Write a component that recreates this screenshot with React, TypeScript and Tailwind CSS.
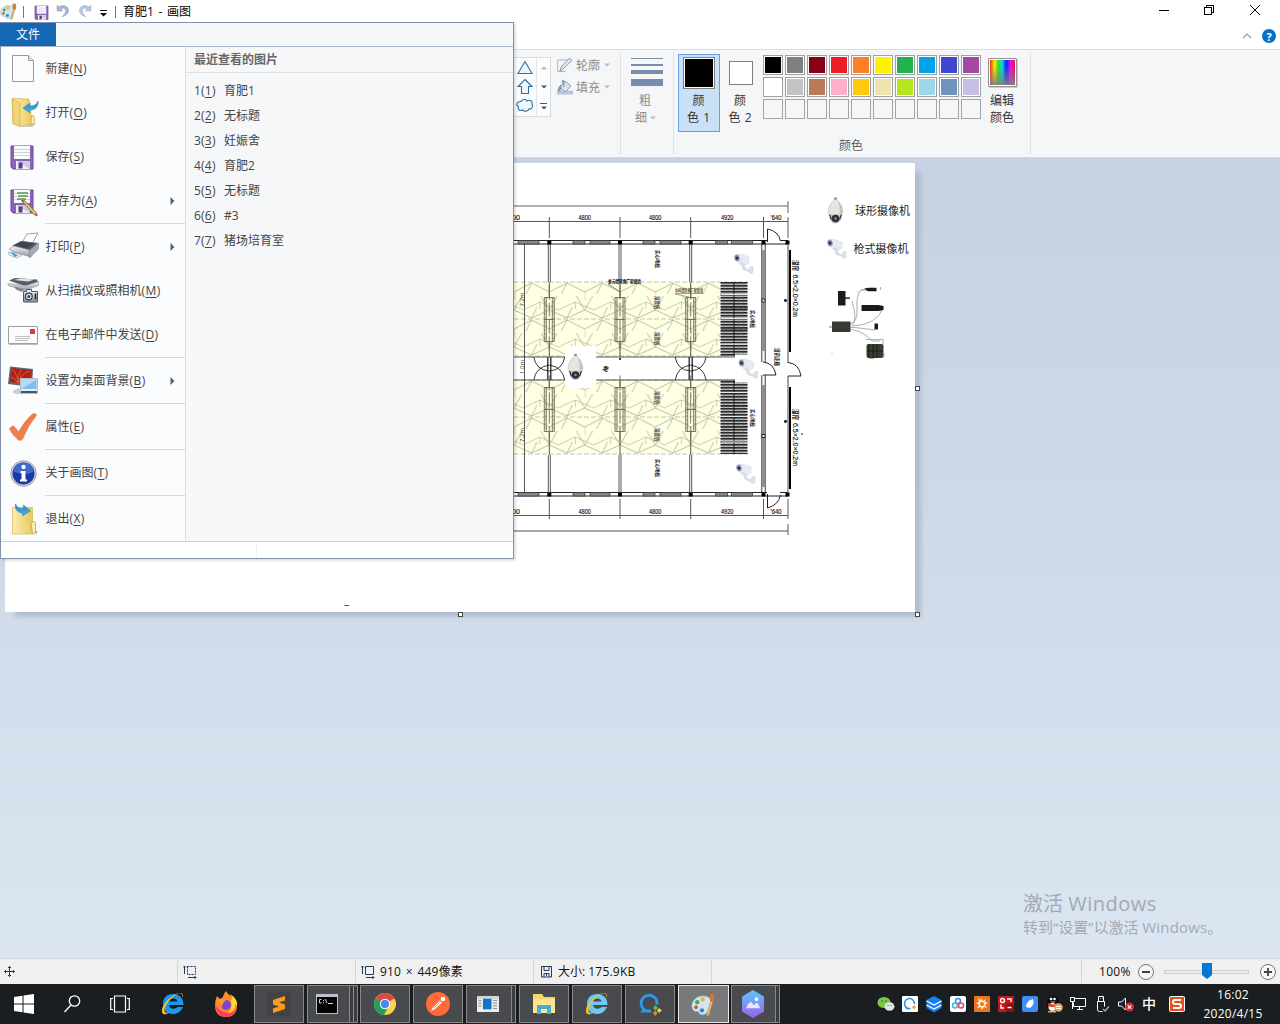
import React from "react";

type Kids = { children?: React.ReactNode };

/* ---------- small shared icons ---------- */

function Palette({ size }: { size: number }) {
  return (
    <svg width={size} height={size} viewBox="0 0 32 32">
      <path d="M1 18C1 10 9 4 17 5c7 0 10 5 9 11-1 9-7 14-13 13-3 0-2-4-5-4-3 1-7-2-7-7z" fill="#d3e6ee" stroke="#7fa6b8" />
      <circle cx="8" cy="13" r="2.800" fill="#4aa84c" />
      <circle cx="15" cy="9.500" r="2.800" fill="#e8b53c" />
      <circle cx="6.500" cy="19.500" r="2.400" fill="#d9534a" />
      <circle cx="14" cy="23.500" r="2.800" fill="#3b7fd0" />
      <path d="M26 9l3 1-3 9-3 11-3 1 1-5z" fill="#e2b878" stroke="#a97a3c" strokeWidth=".6" />
      <path d="M24 1l3 1.500L29 1l1 8-1.500 3-4-1z" fill="#d57a35" stroke="#a65f24" strokeWidth=".6" />
    </svg>
  );
}

function Floppy({ size, pencil = false, box = "0 0 32 32" }: { size: number; pencil?: boolean; box?: string }) {
  return (
    <svg width={size} height={size} viewBox={box}>
      <path d="M5 5h22v23H7l-2-2z" fill="#8a63b8" stroke="#6b4799" />
      <path d="M8 5h16v13H8z" fill="#fafafd" />
      <path d="M8 8.500h16M8 11.500h16M8 14.500h16" stroke="#c8c8d4" strokeWidth=".8" />
      {pencil && <path d="M11 8h11M12 11h10M11 14h9" stroke="#4d9f4a" strokeWidth="1.300" />}
      <path d="M10 20h14v8H10z" fill="#c9ccda" />
      <path d="M10 20l14 8h-14z" fill="#eef0f6" />
      <path d="M12.500 21.500h4v6h-4z" fill="#5a3c88" />
      {pencil && (
        <g>
          <path d="M16 16l2-1 12.500 13-2 2z" fill="#e9c878" stroke="#7b5a2a" strokeWidth=".8" />
          <path d="M28.500 30l2-2 1.500 2-1.500 1.500z" fill="#c95b5b" />
          <path d="M15 15l3 1-1.500 1.500z" fill="#444" />
        </g>
      )}
    </svg>
  );
}

function Arrow({ className }: { className: string }) {
  return (
    <svg width="6" height="4" viewBox="0 0 6 4" className={className}>
      <path d="M0 .5h6l-3 3z" fill="currentColor" />
    </svg>
  );
}

/* ---------- title bar ---------- */

function TitleBar() {
  return (
    <div className="flex h-[23px] shrink-0 items-center bg-white text-[12px] text-black">
      <Palette size={17} />
      <div className="ml-[6px] h-[12px] w-px bg-[#777]" />
      <div className="ml-[8px] mt-[1px]"><Floppy size={19} /></div>
      <svg className="ml-[5px]" width="14" height="15" viewBox="0 0 14 15">
        <path d="M1 1v6h6L4.800 5c4-2 6 1 4 4.500L6 13c7-2 8-7 5-10C9 1 5 1 3 3z" fill="#a5b4cf" stroke="#8fa0bf" strokeWidth=".5" />
      </svg>
      <svg className="ml-[8px]" width="14" height="15" viewBox="0 0 14 15">
        <path d="M13 1v6H7l2.200-2c-4-2-6 1-4 4.500L8 13C1 11 0 6 3 3c2-2 6-2 8 0z" fill="#b6c5d8" stroke="#a1b2c8" strokeWidth=".5" />
      </svg>
      <svg className="ml-[8px] mt-[3px]" width="7" height="7" viewBox="0 0 7 7">
        <path d="M0 0h7v1H0zM0 3h7L3.500 6.500z" fill="#111" />
      </svg>
      <div className="ml-[8px] h-[12px] w-px bg-[#777]" />
      <span className="ml-[7px]">育肥1<span className="px-[1.500px]"> - </span>画图</span>
      <svg className="-mt-[3px] ml-auto mr-[19px]" width="102" height="12" viewBox="0 0 102 12" fill="none" stroke="#000" shapeRendering="crispEdges">
        <path d="M0 6.500h10" />
        <path d="M45.500 3.500h7v7h-7zM47.500 3v-1.500h7v7h-1.500" />
        <path d="M91 1l10 10M101 1l-10 10" shapeRendering="auto" />
      </svg>
    </div>
  );
}

/* ---------- ribbon ---------- */

const ROW1 = ["#000000", "#7f7f7f", "#880015", "#ed1c24", "#ff7f27", "#fff200", "#22b14c", "#00a2e8", "#3f48cc", "#a349a4"];
const ROW2 = ["#ffffff", "#c3c3c3", "#b97a57", "#ffaec9", "#ffc90e", "#efe4b0", "#b5e61d", "#99d9ea", "#7092be", "#c8bfe7"];

function Swatches() {
  return (
    <div className="grid grid-cols-[repeat(10,20px)] gap-[2px]">
      {[...ROW1, ...ROW2].map((c) => (
        <div key={c} className="h-[20px] w-[20px] border border-[#a0a0a0] bg-white p-px">
          <div className="h-full w-full" style={{ backgroundColor: c }} />
        </div>
      ))}
      {ROW1.map((c) => (
        <div key={"e" + c} className="h-[20px] w-[20px] border border-[#a5a5a5] bg-[#f5f6f7]" />
      ))}
    </div>
  );
}

function Ribbon() {
  return (
    <div className="flex h-[108px] shrink-0 border-b border-[#d3d9e2] bg-[#f5f6f7] pl-[514px] text-[12px] leading-[17px]">
      <div className="mt-[7px] flex h-[60px] w-[37px] border border-l-0 border-[#dadbdc] bg-[#fbfcfd]">
        <svg className="mt-[1px]" width="22" height="56" viewBox="0 0 22 56" fill="#eef7fd" stroke="#2f6f9f" strokeWidth="1.100">
          <path d="M11 2.500L18 14.500H4z" />
          <path d="M11 20.500l7 7h-3.500v7h-7v-7H4z" />
          <path d="M7 42.500c1-2.500 5-2.500 6-.5 3-2 6 .5 5 3 1.500 3-.5 5.500-3 5-1 2.500-5 3-6 1-3 1.500-5.500-.5-4.500-3-3-2-1.500-6 2.500-5.500z" />
        </svg>
        <div className="flex h-full w-[14px] flex-col items-center justify-between border-l border-[#e3e5e8] pb-[6px] pt-[8px]">
          <Arrow className="rotate-180 text-[#b0b5bd]" />
          <Arrow className="mt-[1px] text-[#44546c]" />
          <div className="flex flex-col items-center"><div className="mb-[2px] h-px w-[7px] bg-[#44546c]" /><Arrow className="text-[#44546c]" /></div>
        </div>
      </div>
      <div className="ml-[6px] mt-[4px] flex w-[63px] flex-col text-[#8c8c8c]">
        <div className="flex h-[22px] items-center">
          <svg width="16" height="16" viewBox="0 0 16 16"><path d="M10 3H.7v11.500h8" fill="none" stroke="#a9b3c6" /><path d="M3 14l1-4 8.500-9 2.500 2.500L6 12z" fill="#dfe5ef" stroke="#8998b4" /></svg>
          <span className="ml-[3px]">轮廓</span><Arrow className="ml-[4px] text-[#bbb]" />
        </div>
        <div className="flex h-[22px] items-center">
          <svg width="16" height="16" viewBox="0 0 16 16"><path d="M0 11.500h16v4H0z" fill="#b8c4da" /><path d="M8 2l6 5-6 6-5-5z" fill="#dde3ed" stroke="#8998b4" /><path d="M7 8V2q-2-2-2 1M4 6q-3 2-3 6h2l1-4z" fill="#8fa0bf" stroke="#8998b4" /></svg>
          <span className="ml-[3px]">填充</span><Arrow className="ml-[4px] text-[#bbb]" />
        </div>
      </div>
      <div className="mt-[2px] h-[102px] w-px bg-[#e0e2e4]" />
      <div className="flex w-[52px] flex-col items-center pt-[8px] text-[#8c8c8c]">
        <div className="-ml-[1px] flex h-[28px] w-[32px] flex-col justify-between">
          <div className="h-px bg-[#7a8cad]" /><div className="h-[2px] bg-[#7a8cad]" /><div className="h-[4px] bg-[#7a8cad]" /><div className="h-[7px] bg-[#7a8cad]" />
        </div>
        <span className="-ml-[4px] mt-[6px]">粗</span>
        <span className="-ml-[3px] flex items-center">细<Arrow className="ml-[3px] text-[#bbb]" /></span>
      </div>
      <div className="mt-[2px] h-[102px] w-px bg-[#e0e2e4]" />
      <div className="ml-[4px] mt-[4px] flex h-[78px] w-[42px] flex-col items-center border border-[#62a2e4] bg-[#c9e0f7] pt-[2px] text-[#333]">
        <div className="h-[32px] w-[32px] border border-[#7f7f7f] bg-white p-px"><div className="h-full w-full bg-black" /></div>
        <span className="-ml-[1px] mt-[3px]">颜</span><span className="-ml-[1px]">色<span className="pl-[1px]"> 1</span></span>
      </div>
      <div className="mt-[11px] flex w-[42px] flex-col items-center text-[#333]">
        <div className="h-[24px] w-[24px] border border-[#7f7f7f] bg-white" />
        <span className="-ml-[2px] mt-[7px]">颜</span><span className="-ml-[2px]">色<span className="pl-[1px]"> 2</span></span>
      </div>
      <div className="ml-[1px] flex w-[218px] flex-col pt-[5px]">
        <Swatches />
        <span className="-ml-[42px] mt-[18px] text-center text-[#5a5a5a]">颜色</span>
      </div>
      <div className="ml-[6px] mt-[8px] flex w-[30px] flex-col items-center text-[#333]">
        <div className="h-[29px] w-[29px] rounded-[1px] border border-[#9a8f98] bg-white p-px shadow-[1px_1px_0_#ccc]">
          <div className="h-full w-full bg-[linear-gradient(0deg,rgba(128,128,128,0.9)_0%,rgba(128,128,128,0)_75%),linear-gradient(90deg,#f03010,#f8e800_18%,#20e020_35%,#10d8e8_48%,#1020f0_65%,#e010f0_82%,#f01040)]" />
        </div>
        <span className="mt-[5px]">编辑</span><span>颜色</span>
      </div>
      <div className="ml-[13px] mt-[2px] h-[102px] w-px bg-[#e0e2e4]" />
    </div>
  );
}

/* ---------- file menu ---------- */

function MenuIcon({ kind }: { kind: string }) {
  if (kind === "save") return <Floppy size={32} box="1 0 32 32" />;
  if (kind === "saveas") return <Floppy size={32} box="1 0 32 32" pencil />;
  return (
    <svg width="32" height="32" viewBox="0 0 32 32">
      <defs>
        <linearGradient id="fold" x1="0" x2="1"><stop offset="0" stopColor="#fbeeb0" /><stop offset="1" stopColor="#e8c95e" /></linearGradient>
        <linearGradient id="blue" x1="0" x2="0" y1="0" y2="1"><stop offset="0" stopColor="#2e7fb8" /><stop offset="1" stopColor="#45b8ec" /></linearGradient>
        <linearGradient id="metal" x1="0" x2="0" y1="0" y2="1"><stop offset="0" stopColor="#f4f5f6" /><stop offset="1" stopColor="#8f959c" /></linearGradient>
      </defs>
      {kind === "new" && <g><path d="M5.500 2.500h16l5 5v21h-21z" fill="#fbfbfb" stroke="#9a9a9a" /><path d="M21.500 2.500v5h5" fill="#e4e4e4" stroke="#9a9a9a" /></g>}
      {kind === "open" && (
        <g>
          <path d="M12 30l13-3 4 0-4 3z" fill="#c9c9c9" />
          <path d="M5 1.500l17 .5 2 16 2 1v8l-13 2-7-2z" fill="url(#fold)" stroke="#d3b04e" strokeWidth=".7" />
          <path d="M5.500 2l7.500 4v24l-7-4z" fill="#f0d477" stroke="#d3b04e" strokeWidth=".7" />
          <path d="M24.500 19h2.500q1 4 0 8h-3z" fill="#fbeeb0" stroke="#cda53c" strokeWidth=".7" />
          <path d="M16 11l7-5v3c4 0 6.500-1 8-5 .5 6-3 9-8 9v3z" fill="url(#blue)" stroke="#2f8bc0" strokeWidth=".6" />
        </g>
      )}
      {kind === "print" && (
        <g>
          <path d="M16 10l4-7 11-1-6 11z" fill="#fcfcfc" stroke="#8a8a8a" strokeWidth=".8" />
          <path d="M5 15l9-5 17 2-9 8z" fill="#555b62" />
          <path d="M2 18l5-3 16 4 1 7-18-5z" fill="url(#metal)" stroke="#767c84" strokeWidth=".5" />
          <path d="M22 20l9.500-8v6l-9 9z" fill="#a5aab0" stroke="#767c84" strokeWidth=".5" />
          <path d="M7 14l8-3.500 12 2-7 5z" fill="#3f444b" />
          <path d="M1 21l8 1 6 2-5 3-8-3z" fill="#eef5fb" stroke="#8a98a8" strokeWidth=".6" />
          <path d="M3 21.500l5 1 3 2-3 1.500z" fill="#4d9fd4" />
        </g>
      )}
      {kind === "scan" && (
        <g transform="translate(0 .5)">
          <path d="M2 5l6-2.500 22 1.500 1 3-12 4z" fill="#555d66" />
          <path d="M1 8l18 2 12.500-4v4l-14 5L1 10z" fill="url(#metal)" stroke="#7d848b" strokeWidth=".5" />
          <path d="M7 4.500l14 1.500 7-2-14-1z" fill="#dde2e8" />
          <path d="M7 11l10 2.500-2 3-6-2.500z" fill="#7f8892" />
          <path d="M16.500 16h3v-2h5v2h6v10.500h-14z" fill="url(#metal)" stroke="#4e5965" />
          <circle cx="21.800" cy="21" r="3.400" fill="#dbe3ea" stroke="#33404d" strokeWidth="1.200" /><circle cx="21.800" cy="21" r="1.500" fill="#2e4a66" />
          <path d="M28.500 18v6" stroke="#222" strokeWidth="1.600" />
        </g>
      )}
      {kind === "mail" && (
        <g>
          <path d="M1.500 7.500h29v17h-29z" fill="#fcfcfc" stroke="#a1a1a1" /><path d="M2 25.500h29" stroke="#bbb" />
          <path d="M23 10h5v5h-5z" fill="#d4414c" /><path d="M8 17.500h15M8 19.500h15M8 21.500h13" stroke="#b9b9b9" strokeWidth=".9" />
        </g>
      )}
      {kind === "desktop" && (
        <g>
          <path d="M6 26q5-5 10 0l2 2q-7 2-12 0z" fill="#c9ced4" />
          <path d="M3 1.500l23 2.500-1 18L1 19z" fill="#62656d" /><path d="M4.500 3l20 2.300-1 14L3 17z" fill="#ad2118" />
          <path d="M11 18Q14 8 23 6M11 18Q10 8 5 4M11 18Q11 8 15 4.500M11 18q6-5 12-5M11 18Q7 12 4 12" stroke="#e2603f" strokeWidth=".9" fill="none" />
          <path d="M13.500 13.500h17v15h-17z" fill="#e8edf3" stroke="#b4bcc6" /><path d="M14.500 14.500h15v9.500h-15z" fill="#7fbdf0" /><path d="M14.500 24L29 15v-.5H14.500z" fill="#b5dbf8" />
          <path d="M14 26h16v2H14z" fill="#3f5a73" />
        </g>
      )}
      {kind === "check" && <path d="M2.500 18q2-3 4-3 3 3 5 6Q18.500 9 25.500 3q3-1 4 1Q20.500 15 15.500 28q-1 2-4 1Q6.500 25 2.500 18z" fill="#ee7f49" stroke="#d9703f" strokeWidth=".8" />}
      {kind === "info" && (
        <g transform="translate(.5 .5)">
          <circle cx="16" cy="16" r="12.800" fill="#c8ccd3" stroke="#8b8f98" strokeWidth=".7" /><circle cx="16" cy="16" r="11" fill="#173aa8" />
          <path d="M6 14a10 9 0 0 1 20 0q-8 5-20 0z" fill="#3f69cc" /><circle cx="16" cy="9.500" r="2.200" fill="#fff" /><path d="M13 13.500h5V22h1.500v2h-7v-2H14v-6.500h-1z" fill="#fff" />
        </g>
      )}
      {kind === "exit" && (
        <g>
          <path d="M26 29l5-1-2 3z" fill="#aaa" />
          <path d="M5.500 4.500h20v26.500h-20z" fill="url(#fold)" stroke="#d9bd5a" strokeWidth=".8" /><path d="M24 19.500l3-1 1.500 1v10l-3 1.500z" fill="#fbeeb0" stroke="#cda53c" strokeWidth=".8" />
          <path d="M8.500 1c2 4 4 5 8 4V2l7 6-8 5v-3c-5 0-8-4-7-9z" fill="url(#blue)" stroke="#2f8bc0" strokeWidth=".6" />
        </g>
      )}
    </svg>
  );
}

const ITEMS: { t: string; k: string; icon: string; sub?: boolean; sep?: boolean }[] = [
  { t: "新建", k: "N", icon: "new" },
  { t: "打开", k: "O", icon: "open" },
  { t: "保存", k: "S", icon: "save" },
  { t: "另存为", k: "A", icon: "saveas", sub: true, sep: true },
  { t: "打印", k: "P", icon: "print", sub: true },
  { t: "从扫描仪或照相机", k: "M", icon: "scan" },
  { t: "在电子邮件中发送", k: "D", icon: "mail", sep: true },
  { t: "设置为桌面背景", k: "B", icon: "desktop", sub: true, sep: true },
  { t: "属性", k: "E", icon: "check", sep: true },
  { t: "关于画图", k: "T", icon: "info", sep: true },
  { t: "退出", k: "X", icon: "exit" },
];

const RECENT = ["育肥1", "无标题", "妊娠舍", "育肥2", "无标题", "#3", "猪场培育室"];

function FileMenu() {
  return (
    <div className="absolute left-0 top-[22px] flex h-[537px] w-[514px] flex-col border border-[#7f90a8] bg-white text-[12px] text-[#444] shadow-[2px_2px_2px_rgba(0,0,0,0.12)]">
      <div className="flex h-[24px] shrink-0 border-b border-[#a6b5c9] bg-[#f5f6f7]">
        <div className="-ml-px flex w-[56px] items-center justify-center bg-[#1467b3] text-white">文件</div>
      </div>
      <div className="flex h-[495px] shrink-0 border-b border-[#c5d2e0]">
        <div className="flex w-[185px] flex-col border-r border-[#d9dce0] bg-[#fbfcfe]">
          {ITEMS.map((it) => (
            <React.Fragment key={it.k}>
              <div className="flex h-[44px] shrink-0 items-center pl-[6px] pr-[10px]">
                <MenuIcon kind={it.icon} />
                <span className="ml-[6.500px] whitespace-nowrap">{it.t}<span className="tracking-[0.400px]">(<u className="underline-offset-2">{it.k}</u>)</span></span>
                {it.sub && <svg className="ml-auto" width="5" height="8" viewBox="0 0 5 8"><path d="M.5 0l4 4-4 4z" fill="#4f6480" /></svg>}
              </div>
              {it.sep && <div className="ml-[44px] h-[2px] shrink-0 border-t border-[#d7dadd]" />}
            </React.Fragment>
          ))}
        </div>
        <div className="flex flex-1 flex-col bg-[#f5f7f9]">
          <div className="flex h-[26px] items-center border-b border-[#dddfe2] pl-[8px] font-bold text-[#666]">最近查看的图片</div>
          <div className="mt-[5px] flex flex-col pl-[8px]">
            {RECENT.map((r, i) => (
              <div key={i} className="flex h-[25px] items-center">
                <span className="w-[30px] tracking-[0.200px]">{i + 1}(<u className="underline-offset-2">{i + 1}</u>)</span>
                <span>{r}</span>
              </div>
            ))}
          </div>
        </div>
      </div>
      <div className="flex-1"><div className="ml-[255px] h-full w-px bg-[#eef0f2]" /></div>
    </div>
  );
}

/* ---------- floor plan ---------- */

const COLS = [549.3, 620, 690.7];

function Bullet({ x, y }: { x: number; y: number }) {
  return (
    <g transform={`translate(${x} ${y})`}>
      <path d="M1 1l5-1 9 3v6l-4 2-6-1z" fill="#e6eaf3" stroke="#cdd4e1" strokeWidth=".5" />
      <path d="M7 9l3 1 1 4 4 2 1-3 3-.5v6l-3 1-1-2-6-2z" fill="#dce1ec" stroke="#c3cbda" strokeWidth=".5" />
      <ellipse cx="3" cy="4" rx="2.600" ry="3.400" transform="rotate(-15 3 4)" fill="#8b94aa" /><circle cx="3" cy="4" r="1.500" fill="#222c44" />
    </g>
  );
}

function Dome({ x, y }: { x: number; y: number }) {
  return (
    <g transform={`translate(${x} ${y})`}>
      <path d="M8 0q1.500 0 1.500 2.500 6 5 6 12.500-1 4-7.500 4T.5 15q0-7.500 6-12.500Q6.500 0 8 0z" fill="#e4e4e0" stroke="#b5b5b0" strokeWidth=".5" />
      <path d="M10 3q5 5 5 12l-3 2q1-9-2-14z" fill="#c3c3be" />
      <path d="M6.800 0h2.400v2H6.800z" fill="#888" />
      <path d="M2 17h12v4q-2 5-6 5t-6-5z" fill="#c4c7cc" /><circle cx="8" cy="21" r="3.800" fill="#2b2e36" /><circle cx="8" cy="21" r="1.300" fill="#7f93b5" />
      <path d="M2 17l2 5M14 17l-2 5" stroke="#333" strokeWidth="1.200" />
    </g>
  );
}

function Trough({ x, y }: { x: number; y: number }) {
  return (
    <g stroke="#6c6c54" fill="none" strokeWidth=".9">
      <path d={`M${x - 5} ${y}h10v44h-10zM${x - 3} ${y}v44M${x + 3} ${y}v44M${x - 5} ${y + 22}h10`} />
      <path d={`M${x} ${y - 12}V${y + 57}`} strokeDasharray="14 3" />
      <path d={`M${x - 4} ${y}v44M${x + 4} ${y}v44`} strokeDasharray="1 3" />
    </g>
  );
}

function Slats({ y }: { y: number }) {
  return (
    <g>
      <rect x="720.500" y={y} width="27" height="74" fill="url(#slat)" />
      <path d={`M734 ${y}v74M721 ${y + 26}h27M721 ${y + 47}h27`} stroke="#222" strokeWidth="1.100" />
      <path d={`M724 ${y}v74M728 ${y}v74M738 ${y}v74M743 ${y}v74`} stroke="#666" strokeWidth=".5" />
      <path d={`M721 ${y + 12.5}h27M721 ${y + 36.5}h27M721 ${y + 62}h27`} stroke="#e8e8e8" strokeWidth="1" />
    </g>
  );
}

function VText({ x, y, size = 5, bold = true, length, children }: Kids & { x: number; y: number; size?: number; bold?: boolean; length?: number }) {
  return <text transform={`translate(${x} ${y}) rotate(90)`} fontSize={size} fontWeight={bold ? 700 : 400} fill="#222" textLength={length} lengthAdjust="spacingAndGlyphs">{children}</text>;
}

function Zone({ y, pattern }: { y: number; pattern: string }) {
  return (
    <g>
      <rect x="500" y={y} width="220" height="74" fill="#ffffe3" />
      <rect x="500" y={y} width="220" height="74" fill={pattern} />
      <path d={`M500 ${y + 37}h220M500 ${y}h248M500 ${y + 74}h248`} stroke="#b5b5a0" strokeWidth=".8" strokeDasharray="5 2" />
    </g>
  );
}

function HexPattern({ id, y }: { id: string; y: number }) {
  return (
    <pattern id={id} x="549.3" y={y} width="35.350" height="37" patternUnits="userSpaceOnUse">
      <g stroke="#a3a386" strokeWidth=".7" fill="none">
        <path d="M0 10L17.700 1L35.350 10M0 28L17.700 36L35.350 28M0 10v8" />
        <path d="M0 28L8 14M35.350 28L27 14M17.700 1L12 12M17.700 36L23 25" />
        <path d="M-8 20L9 28L26 20L43.300 28M26 20v7" strokeWidth=".55" />
      </g>
    </pattern>
  );
}

function FloorPlan() {
  const windows = [[518, 21], [573, 12], [590, 20], [643, 12], [660, 21], [715.7, 12], [731.5, 21]];
  return (
    <svg className="block h-[449px] w-[910px] bg-white" viewBox="5 163 910 449">
      <defs>
        <HexPattern id="hexTop" y={282} />
        <HexPattern id="hexBottom" y={380} />
        <pattern id="slat" x="720" y="282" width="3.400" height="3" patternUnits="userSpaceOnUse">
          <rect width="3.400" height="3" fill="#c4c4c4" /><path d="M0 .8h3.400" stroke="#1c1c1c" strokeWidth="1.500" />
        </pattern>
      </defs>
      <Zone y={282} pattern="url(#hexTop)" />
      <Zone y={380} pattern="url(#hexBottom)" />
      <Slats y={282} />
      <Slats y={380} />
      {/* dimension lines */}
      <g stroke="#444" strokeWidth=".9" fill="none">
        <path d="M500 206h288M788 201v12" stroke="#555" />
        <path d="M500 221.500h288" />
        <path d="M500 515.500h288" />
        <path d="M500 531h288" stroke="#888" strokeWidth="1.300" />
        <path d="M788 524v11" />
        {[...COLS, 763.5, 788].map((x) => <path key={x} d={`M${x} 217v21M${x} 499v20`} />)}
        <path d="M524.500 244v249" />
        <path d="M500 357h248M500 380h248" />
      </g>
      <rect x="735" y="354.500" width="14.500" height="28" fill="#fff" />
      <g fontFamily="Liberation Sans" fontSize="7.500" fill="#111" stroke="#111" strokeWidth=".15">
        {[219.5, 513.8].map((y) => (
          <g key={y}>
            <text x="512" y={y} textLength="8" lengthAdjust="spacingAndGlyphs">00</text>
            <text x="578.500" y={y} textLength="12.500" lengthAdjust="spacingAndGlyphs">4800</text>
            <text x="649" y={y} textLength="12.500" lengthAdjust="spacingAndGlyphs">4800</text>
            <text x="721" y={y} textLength="12.500" lengthAdjust="spacingAndGlyphs">4920</text>
            <text x="770.500" y={y} textLength="11" lengthAdjust="spacingAndGlyphs">'640</text>
          </g>
        ))}
      </g>
      {/* outer walls */}
      {[240.5, 492.5].map((y) => (
        <g key={y}>
          <path d={`M500 ${y}h267M780 ${y}h8M500 ${y + 3.5}h288`} stroke="#222" strokeWidth="1" />
          {windows.map(([x, w]) => <rect key={x} x={x} y={y} width={w} height="3.500" fill="#888" stroke="#333" strokeWidth=".7" />)}
          {[...COLS, 763.5, 787.5].map((x) => <rect key={x} x={x - 2} y={y} width="4" height="4" fill="#000" />)}
        </g>
      ))}
      {COLS.map((x) => (
        <g key={x} stroke="#444" strokeWidth=".9" fill="none">
          <path d={`M${x - 1} 244v38M${x + 1} 244v38M${x - 1} 455v38M${x + 1} 455v38`} />
          <path d={`M${x} 282v15M${x} 342v15M${x} 380v7M${x} 432v23`} />
          {x !== 620 && (
            <g stroke="#222">
              <path d={`M${x - 1.5} 357v23M${x + 1.5} 357v23`} strokeWidth="1.300" />
              <path d={`M${x - 15.5} 357q2 13 15.500 14q13-1 15.500-14M${x - 15.5} 380q2-13 15.500-15q13 2 15.500 15`} />
            </g>
          )}
        </g>
      ))}
      {COLS.map((x) => <Trough key={x} x={x} y={297.5} />)}
      {COLS.map((x) => <Trough key={x} x={x} y={387.5} />)}
      <circle cx="620" cy="359" r="1" />
      {/* east corridor */}
      <g fill="none" stroke="#222">
        <path d="M761.800 244v118M765.200 244v118M761.800 375v118M765.200 375v118" strokeWidth=".9" />
        <path d="M763.500 250v101M763.500 385v102" stroke="#888" strokeWidth="2.500" />
        <path d="M788 244v119M788 376v117" stroke="#666" strokeWidth="1.200" />
        <path d="M790 250v102M790 387v102" stroke="#000" strokeWidth="2" />
        <path d="M767.500 242v-13q11 2 13 12M767.500 494v14q11-3 13-13M763 362q11 1 13 13h-13M788 362.500q11 1 13 13.500h-13" />
        <path d="M762 299h3v3h-3zM762 434.500h3v3h-3z" fill="#fff" strokeWidth="1" />
      </g>
      <circle cx="785.500" cy="300.500" r="1.400" /><circle cx="785.500" cy="421.500" r="1.400" /><circle cx="802" cy="434" r=".8" />
      {/* labels */}
      <VText x={792.5} y={260} size={6.5} length={11}>湿帘</VText>
      <VText x={792.5} y={409} size={6.5} length={11}>湿帘</VText>
      <g fontFamily="Liberation Sans" stroke="#222" strokeWidth=".15">
        <VText x={792.5} y={274.5} size={8} bold={false} length={42.5}>6.5×2.0×0.2m</VText>
        <VText x={792.5} y={423} size={8} bold={false} length={43}>6.5×2.0×0.2m</VText>
      </g>
      <VText x={775} y={348} size={5.2} length={18}>湿帘走廊</VText>
      <VText x={751} y={310} size={5} length={18}>实心地板</VText><VText x={751} y={409} size={5} length={18}>实心地板</VText>
      <VText x={655.5} y={250} size={5} length={18}>实心地板</VText><VText x={655.5} y={459} size={5} length={18}>实心地板</VText>
      <g opacity=".75">
        <VText x={655} y={296} size={5.5} length={13.5}>漏粪板</VText><VText x={655} y={332} size={5.5} length={13.5}>漏粪板</VText>
        <VText x={655} y={391} size={5.5} length={13.5}>漏粪板</VText><VText x={655} y={428} size={5.5} length={13.5}>漏粪板</VText>
      </g>
      <g opacity=".8">
        <text transform="translate(523.500 306.500) rotate(-90)" fontSize="6">7.2m</text>
        <text transform="translate(523.500 442) rotate(-90)" fontSize="6">7.2m</text>
        <text transform="translate(523.500 374) rotate(-90)" fontSize="6">1.0m</text>
      </g>
      <text x="608" y="283" fontSize="5" fontWeight="700" textLength="33" lengthAdjust="spacingAndGlyphs">单元墙转角厂家提供</text>
      <path d="M608 284l12 8" stroke="#555" strokeWidth=".7" />
      <text x="675" y="292" fontSize="5" fontWeight="700" fill="#55553f" textLength="28" lengthAdjust="spacingAndGlyphs">中间墙转角厂家提供</text>
      <path d="M675 293.500h28M675 294l14 3" stroke="#777" strokeWidth=".7" />
      <text x="603" y="371" fontSize="6" fontWeight="700" transform="rotate(20 606 368)">走</text>
      {/* cameras */}
      <rect x="565" y="346" width="31" height="42" fill="#fff" />
      <Dome x={567.5} y={354} />
      <Bullet x={734} y={254} /><Bullet x={738.5} y={359} /><Bullet x={736} y={464} />
      <Dome x={827.5} y={197.5} /><Bullet x={827} y={239} />
      <g fontSize="11" fill="#222"><text x="855" y="215">球形摄像机</text><text x="853.500" y="253">枪式摄像机</text></g>
      {/* cable kit */}
      <g fill="none" stroke="#999" strokeWidth=".8">
        <path d="M845 298h5M850 324q8-2 7-16-1-12 4-18h5M852 325q6-4 0-24M852 326q25-1 31-18M850 327q18 2 25 3M850 329q15 3 22 12h8M866 339.500h17v5" />
        <path d="M829 327h4" stroke="#555" />
      </g>
      <g fill="#1b1b18">
        <rect x="838" y="291" width="7.500" height="14.500" /><path d="M845 297.500h5v1.200h-5zM864 288.800l4-1h8.500v3.500H868z" />
        <path d="M861.500 305h17l5 1v4l-5 1h-17z" /><rect x="832" y="321.500" width="18.500" height="10.500" fill="#393931" />
        <rect x="874.500" y="323.500" width="3.500" height="6" /><rect x="866.500" y="344" width="17" height="14" rx="2" fill="#3a3d36" />
      </g>
      <path d="M861 290h3M880.500 287v3M866.500 345v5M884 353v4M858 291v1.500M869 358.500h5" stroke="#5fc45f" strokeWidth=".8" />
      <path d="M869 344v14M873 344v14M877 344v14M867 351h16" stroke="#15170f" strokeWidth=".8" />
      <path d="M831 354h2" stroke="#9fd09f" strokeWidth=".8" />
      <path d="M344.500 605.500h4.500" stroke="#333" fill="none" strokeWidth=".9" />
    </svg>
  );
}

function Workspace() {
  return (
    <div className="relative min-h-0 flex-1 overflow-hidden bg-[linear-gradient(180deg,#c7d1e2_0%,#cfd9e8_50%,#dce6f2_100%)] pl-[5px] pt-[5px]">
      <div className="w-[910px] shadow-[8px_7px_4px_-2px_#b1bed1]"><FloorPlan /></div>
      <div className="absolute left-[915px] top-[228px] h-[5px] w-[5px] border border-[#444] bg-white" />
      <div className="absolute left-[458px] top-[454px] h-[5px] w-[5px] border border-[#444] bg-white" />
      <div className="absolute left-[915px] top-[454px] h-[5px] w-[5px] border border-[#444] bg-white" />
      <div className="absolute left-[1023px] top-[732px] whitespace-nowrap text-[#a1a9b4]">
        <div className="text-[20px] leading-[27px]">激活 <span className="tracking-[0.500px]">Windows</span></div>
        <div className="text-[15px] leading-[20px]">转到“设置”以激活 <span className="tracking-[0.150px]">Windows</span>。</div>
      </div>
    </div>
  );
}

/* ---------- status bar ---------- */

function StatusBar() {
  const cell = "flex h-[23px] items-center border-r border-[#d4d4d4]";
  return (
    <div className="flex h-[26px] shrink-0 items-center border-t border-[#d2d5d9] bg-[#f0f0f0] text-[12px] text-[#111]">
      <div className={cell + " w-[178px] pl-[4px]"}>
        <svg width="12" height="12" viewBox="0 0 12 12" fill="none" stroke="#223a5e"><path d="M5.500 .5v10M.5 5.500h10M4 2L5.500 .5 7 2M4 9l1.500 1.500L7 9M2 4L.5 5.500 2 7M9 4l1.500 1.500L9 7" /></svg>
      </div>
      <div className={cell + " w-[178px] pl-[5px]"}>
        <svg width="14" height="14" viewBox="0 0 14 14" fill="none" stroke="#223a5e"><path d="M4.500 1.500h8v8h-8z" strokeDasharray="2 1" /><path d="M1.500 9V1M0 2.500L1.500 1 3 2.500M5 12.500h8M11.500 11l1.500 1.500-1.500 1.500" /></svg>
      </div>
      <div className={cell + " w-[178px] pl-[5px]"}>
        <svg width="14" height="14" viewBox="0 0 14 14" fill="none" stroke="#223a5e"><path d="M4.500 1.500h8v8h-8z" /><path d="M1.500 9V1M0 2.500L1.500 1 3 2.500M5 12.500h8M11.500 11l1.500 1.500-1.500 1.500" /></svg>
        <span className="ml-[5px] tracking-[0.150px]">910<span className="px-[1.500px]"> × </span>449像素</span>
      </div>
      <div className={cell + " w-[178px] pl-[7px]"}>
        <svg width="12" height="12" viewBox="0 0 12 12" fill="none" stroke="#223a5e"><path d="M.5.5h10v10.500h-10zM3 .5v4h5v-4M3 11V7.500h5V11M5.500 8v2" /></svg>
        <span className="ml-[5px]">大小: <span className="tracking-[0.200px]">175.9KB</span></span>
      </div>
      <div className={cell + " w-[370px]"} />
      <span className="ml-[17px] w-[38px] tracking-[0.300px]">100%</span>
      <svg width="18" height="18" viewBox="0 0 18 18"><circle cx="9" cy="9" r="7.500" fill="#f5f5f5" stroke="#777" /><path d="M5 9h8" stroke="#444" strokeWidth="2" /></svg>
      <svg className="ml-[9px]" width="86" height="18" viewBox="0 0 86 18"><path d="M.5 7.500h84v3h-84z" fill="#e7eaea" stroke="#d0d0d0" /><path d="M38 0h10v12l-5 4-5-4z" fill="#0078d7" /></svg>
      <svg className="ml-[9px] shrink-0" width="18" height="18" viewBox="0 0 18 18"><circle cx="9" cy="9" r="7.500" fill="#f5f5f5" stroke="#777" /><path d="M5 9h8M9 5v8" stroke="#444" strokeWidth="1.800" /></svg>
    </div>
  );
}

/* ---------- taskbar ---------- */

function IE({ light = false }: { light?: boolean }) {
  return (
    <svg width="26" height="26" viewBox="0 0 26 26">
      <path d="M13 3c6.500 0 10.500 4 10.500 11H9c.5 4.500 6.500 4.500 8.500 2h5.500c-2 4.500-5.500 7-10 7-6 0-10-4-10-10s4-10 10-10zM9 10.500h8.500c-.5-4-7.500-4-8.500 0z" fill={light ? "#6cc9f2" : "#1c97ea"} />
      <path d="M22 7c3-6-3-6-8-3C7 8 1 16 2 21c1 4 5 2 7 .5-4 1-5.500-1-4-5C7 11.500 12 6 17 3c4-1.500 6-.5 5 4z" fill="#f2c230" />
    </svg>
  );
}

function Task({ w, children, active = false }: Kids & { w: string; active?: boolean }) {
  return (
    <div className={"flex h-[38px] shrink-0 items-center justify-center border " + (active ? "border-[#e8e8e8] bg-[#77797b] " : "border-[#88898b] bg-[#484a4d] ") + w}>{children}</div>
  );
}

function Stack() {
  return <div className="h-[38px] w-[4px] shrink-0 border border-l-0 border-[#88898b] bg-[#3a3c3f]" />;
}

function Tray({ children }: Kids) {
  return <div className="flex w-[24px] shrink-0 items-center justify-center"><svg width="18" height="18" viewBox="0 0 18 18">{children}</svg></div>;
}

function Taskbar() {
  return (
    <div className="flex h-[40px] shrink-0 items-center overflow-hidden bg-[#1b1e21] text-white">
      <svg className="ml-[14px] shrink-0" width="20" height="20" viewBox="0 0 20 20" fill="#fff"><path d="M0 3l8.500-1.300v7.800H0zM9.500 1.500L20 0v9.500H9.500zM0 10.500h8.500v7.800L0 17zM9.500 10.500H20V20L9.500 18.500z" /></svg>
      <svg className="ml-[29px] shrink-0" width="20" height="20" viewBox="0 0 20 20" fill="none" stroke="#fff" strokeWidth="1.300"><circle cx="11.500" cy="7" r="5.200" /><path d="M8 11L1.500 18" /></svg>
      <svg className="ml-[27px] shrink-0" width="20" height="18" viewBox="0 0 20 18" fill="none" stroke="#fff" strokeWidth="1.200"><path d="M4.500 1h11v16h-11zM3 3.500H.7v11H3M17 3.500h2.300v11H17" /></svg>
      <div className="ml-[30px] shrink-0"><IE /></div>
      <svg className="ml-[27px] shrink-0" width="26" height="28" viewBox="0 0 26 28">
        <path d="M13 1q2 4 5 5 5 3 6 9 0 12-11 12T2 15q0-5 2-9l3 3 3-2q1-4 3-6z" fill="#ff8a2a" />
        <path d="M17 4q8 5 7 12l-4-7zM20 6q5 8 0 15l-5 3q5-6 3-13z" fill="#ffd83a" /><path d="M2 14q1 12 11 13 8 0 10-8-4 5-9 4-9-2-12-9z" fill="#ff3a62" />
        <circle cx="13" cy="15" r="5" fill="#7b45cc" /><path d="M5 9l3 1h5l-3 3-1 4z" fill="#ff9a2e" />
      </svg>
      <div className="ml-[15px] flex items-center">
        <Task w="w-[50px]"><svg width="24" height="24" viewBox="0 0 24 24"><rect width="24" height="24" rx="3" fill="#424345" /><path d="M6 8l12-4v4.500l-6 2 6 2v4.500L6 21v-4.500l6-2-6-2z" fill="#ff9b1a" /></svg></Task>
        <div className="ml-[3px] flex"><Task w="w-[43px]"><svg className="-ml-[4px]" width="22" height="20" viewBox="0 0 22 20"><rect width="22" height="20" fill="#bbc2c8" /><rect x="1" y="3" width="20" height="16" fill="#050505" /><path d="M5.500 5.500h-2v3.500h2M7.500 6v1M7.500 8v1M9 5l2 4M12 9.500h5" stroke="#eee" fill="none" strokeWidth=".9" /></svg></Task><Stack /><Stack /></div>
        <div className="ml-[2px]"><Task w="w-[50px]">
          <svg width="24" height="24" viewBox="0 0 24 24"><circle cx="12" cy="12" r="11" fill="#fbd34c" /><path d="M12 12L2.500 6.500A11 11 0 0 1 21.500 6.500z" fill="#da4b41" /><path d="M12 12L2.500 6.500A11 11 0 0 0 11 23l4.500-8z" fill="#1ba260" /><path d="M12 7h9.700a11 11 0 0 0-1.700-2z" fill="#da4b41" /><circle cx="12" cy="12" r="5.200" fill="#fff" /><circle cx="12" cy="12" r="4.200" fill="#4a87ee" /></svg>
        </Task></div>
        <div className="ml-[3px]"><Task w="w-[50px]"><svg width="24" height="24" viewBox="0 0 24 24"><circle cx="12" cy="12" r="12" fill="#ff6c37" /><path d="M5 19l2-3.500 7-7 2 2-7 6.500z" fill="#fff" /><circle cx="17" cy="7" r="2.300" fill="#fff" /><path d="M8 16l7-7" stroke="#ff6c37" strokeWidth=".8" /></svg></Task></div>
        <div className="ml-[3px] flex"><Task w="w-[46px]"><svg className="-ml-[2px]" width="22" height="16" viewBox="0 0 22 18" preserveAspectRatio="none"><rect width="22" height="18" fill="#ececec" /><rect width="22" height="3" fill="#cfd5d9" /><rect x="6" y="3" width="8.500" height="12" fill="#0f74cc" /><path d="M1.500 5h3M1.500 8h3M1.500 11h3M16 5h4M16 8h4M16 11h4M16 14h4" stroke="#888" /></svg></Task><Stack /></div>
        <div className="ml-[3px]"><Task w="w-[50px]"><svg width="22" height="22" viewBox="0 0 22 22"><path d="M0 1h9l2 3h11v16H0z" fill="#f7d46c" /><path d="M0 6h22v14H0z" fill="#fde48f" /><path d="M4 21v-9h14v9h-4v-5H8v5z" fill="#48acd6" /></svg></Task></div>
        <div className="ml-[3px]"><Task w="w-[50px]"><IE light /></Task></div>
        <div className="ml-[3px]"><Task w="w-[50px]"><svg width="24" height="24" viewBox="0 0 24 24"><path d="M19 12.500a8 8 0 1 0-6 6.500H5l2-2.500" fill="none" stroke="#2c9ae8" strokeWidth="2.800" /><path d="M17.500 13l2.500 3-2.500 2.500L15 16z" fill="#4bc34f" /><path d="M21 16l3 2.500-3 2.500-2-2.500z" fill="#f5cf3a" /><path d="M17 18.500l2.500 2.500-2.500 3-2-3z" fill="#f5842e" /></svg></Task></div>
        <div className="ml-[3px]"><Task w="w-[51px]" active><Palette size={25} /></Task></div>
        <div className="ml-[2px] flex"><Task w="w-[45px]">
          <svg className="-ml-[2px]" width="24" height="28" viewBox="0 0 24 26" preserveAspectRatio="none"><defs><linearGradient id="hx" x1="0" x2="0" y1="0" y2="1"><stop offset="0" stopColor="#5bc8f5" /><stop offset="1" stopColor="#9a60ee" /></linearGradient></defs><path d="M12 0l11 6v14l-11 6L1 20V6z" fill="url(#hx)" strokeLinejoin="round" /><path d="M5 17q4-9 7-4 1 2 2 0 3-3 5 4z" fill="#e6e4ff" /><circle cx="15.500" cy="8.500" r="1.800" fill="#fff" /></svg>
        </Task><Stack /></div>
      </div>
      <div className="ml-[94px] flex items-center">
        <Tray><ellipse cx="7" cy="7.500" rx="6.500" ry="5.500" fill="#7ac943" /><ellipse cx="12.500" cy="11.500" rx="5" ry="4.300" fill="#e3e6e6" /><path d="M4.500 6h1.500M8.500 6H10M10.500 10.500h1M13.500 10.500h1" stroke="#345" /></Tray>
        <Tray><rect x="1" y="1" width="16" height="16" rx="1" fill="#fff" /><path d="M13.500 9a5 5 0 1 0-4 4.500H5" fill="none" stroke="#2c8ee0" strokeWidth="1.500" /><path d="M13 10l2 2.500-2 2-2-2z" fill="#f6a623" /></Tray>
        <Tray><path d="M9 1l7.500 4v8L9 17.500 1.500 13V5z" fill="#1a7ff0" /><path d="M1.500 6L9 10l7.500-4M1.500 10L9 14l7.500-4" stroke="#fff" fill="none" strokeWidth="1.300" /></Tray>
        <Tray><rect x="1" y="1" width="16" height="16" rx="2" fill="#fff" /><g fill="none" strokeWidth="1.500"><circle cx="9" cy="6" r="2.500" stroke="#3a8df0" /><circle cx="6" cy="10.500" r="2.500" stroke="#40b6e8" /><circle cx="12" cy="10.500" r="2.500" stroke="#dc4c64" /></g></Tray>
        <Tray><rect x="1" y="1" width="16" height="16" rx="1" fill="#ee7418" /><path d="M9 3l1 3 3-2-1 3 3 1-3 2 2 3-3-1-2 3-1-3-4 1 2-3-3-2 3-1-1-4 3 2z" fill="#ffe9cf" /><circle cx="9" cy="9" r="2" fill="#ee7418" /></Tray>
        <Tray><rect x="1" y="1" width="16" height="16" rx="1" fill="#c4161c" /><path d="M9 9h8v8H9z" fill="#8c0f14" /><g fill="none" stroke="#fff" strokeWidth="1.400"><circle cx="5.500" cy="5.500" r="2" /><path d="M10 4h4v3M4 9.500v3.500h3M10.500 12.500h4" /></g></Tray>
        <Tray><rect x="1" y="1" width="16" height="16" rx="2" fill="#3e8ef7" /><path d="M5 12q0-6 7-8 2 6-3 9z" fill="#fff" /></Tray>
        <Tray><ellipse cx="8" cy="9" rx="6" ry="8" fill="#0c0c0c" /><ellipse cx="7.500" cy="12" rx="4" ry="4" fill="#fff" /><path d="M3 8q5 3 10 0v3q-5 2-10 0z" fill="#dd2f2f" /><circle cx="6" cy="4" r="1.300" fill="#fff" /><circle cx="9.500" cy="4" r="1.300" fill="#fff" /><path d="M5 6.500h6l-3 1.500z" fill="#f6a623" /><path d="M3 16h8v1.500H3z" fill="#f6a623" /><circle cx="13.500" cy="12.500" r="4.300" fill="#f7a046" /><path d="M11 11.500h5M11 13.500h5" stroke="#fff" /></Tray>
        <Tray><g fill="none" stroke="#fff"><path d="M5.500 3.500h11v8H4.500v-4M8 14.500h6M10.500 12v2.500M1.500 2.500h4v4h-4zM3.500 7v7" /></g></Tray>
        <Tray><g fill="none" stroke="#fff"><path d="M5.500 1.500h5v5h-5zM4.500 6.500h7v5M4.500 6.500v8q0 2 2 2h3M7 3.500h.5M9 3.500h.5" /><path d="M10 14l2 2 4-4.500" stroke="#aaa" strokeWidth="1.400" /></g></Tray>
        <Tray><path d="M1.500 7h3l4-4v12l-4-4h-3z" fill="none" stroke="#fff" /><circle cx="12.500" cy="12" r="4.500" fill="#d62a34" /><path d="M10.800 10.300l3.400 3.400M14.200 10.300l-3.400 3.400" stroke="#fff" strokeWidth="1.200" /></Tray>
        <span className="-mt-[2px] ml-[4px] w-[24px] text-[14px] font-medium">中</span>
        <div className="ml-[2px] w-[24px]"><svg width="18" height="18" viewBox="0 0 18 18"><rect x="1.500" y="1.500" width="15" height="15" rx="1" fill="#e8521e" stroke="#fff" /><path d="M13 5H7Q5 5 5 7t2 2h4q2 0 2 2t-2 2H5" fill="none" stroke="#fff" strokeWidth="2" /></svg></div>
      </div>
      <div className="ml-[9px] flex w-[64px] shrink-0 flex-col items-center text-[12px] leading-[19px] tracking-[0.250px]"><span>16:02</span><span>2020/4/15</span></div>
    </div>
  );
}

export default function App() {
  return (
    <div className="relative flex h-[1024px] w-[1280px] flex-col overflow-hidden bg-white font-['Open_Sans','Noto_Sans_CJK_SC',sans-serif]">
      <TitleBar />
      <div className="flex h-[27px] shrink-0 items-center justify-end border-b border-[#dadbdc] bg-white pr-[4px]">
        <svg width="10" height="6" viewBox="0 0 10 6" fill="none" stroke="#999" strokeWidth="1.200"><path d="M1 5l4-4 4 4" /></svg>
        <div className="ml-[10px] flex h-[14px] w-[14px] items-center justify-center rounded-full bg-[#0a6fc4] text-[11px] font-bold leading-none text-white">?</div>
      </div>
      <Ribbon />
      <Workspace />
      <StatusBar />
      <Taskbar />
      <FileMenu />
    </div>
  );
}
